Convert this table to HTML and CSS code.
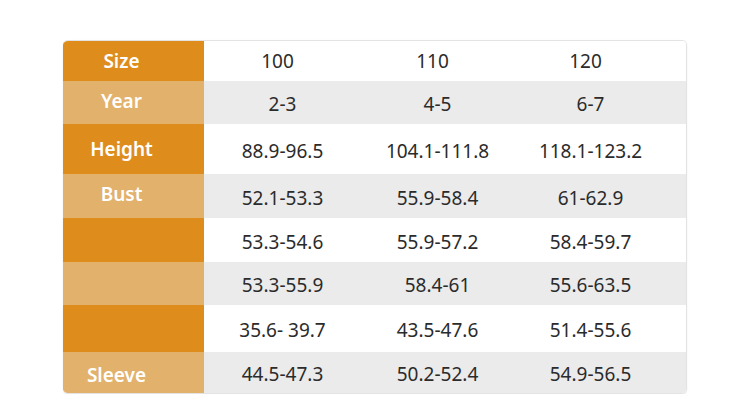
FILE: index.html
```html
<!DOCTYPE html>
<html lang="en">

<head>
    <meta charset="UTF-8">
    <meta name="viewport" content="width=device-width, initial-scale=1.0">
    <title>Size Chart</title>
    <link rel="stylesheet" href="styles.css">
</head>

<body>
    <div class="page">
        <div class="sizeChart">
            <div class="row odd r1">
                <div class="label">Size</div>
                <div class="cell head">100</div>
                <div class="cell head">110</div>
                <div class="cell head">120</div>
                <div class="cell"></div>
            </div>
            <div class="row even r2">
                <div class="label raise">Year</div>
                <div class="cell">2-3</div>
                <div class="cell">4-5</div>
                <div class="cell">6-7</div>
                <div class="cell"></div>
            </div>
            <div class="row odd r3">
                <div class="label">Height</div>
                <div class="cell">88.9-96.5</div>
                <div class="cell">104.1-111.8</div>
                <div class="cell">118.1-123.2</div>
                <div class="cell"></div>
            </div>
            <div class="row even r4">
                <div class="label raise">Bust</div>
                <div class="cell">52.1-53.3</div>
                <div class="cell">55.9-58.4</div>
                <div class="cell">61-62.9</div>
                <div class="cell"></div>
            </div>
            <div class="row odd r5">
                <div class="label"></div>
                <div class="cell">53.3-54.6</div>
                <div class="cell">55.9-57.2</div>
                <div class="cell">58.4-59.7</div>
                <div class="cell"></div>
            </div>
            <div class="row even r6">
                <div class="label"></div>
                <div class="cell">53.3-55.9</div>
                <div class="cell">58.4-61</div>
                <div class="cell">55.6-63.5</div>
                <div class="cell"></div>
            </div>
            <div class="row odd r7">
                <div class="label"></div>
                <div class="cell">35.6- 39.7</div>
                <div class="cell">43.5-47.6</div>
                <div class="cell">51.4-55.6</div>
                <div class="cell"></div>
            </div>
            <div class="row even r8">
                <div class="label sleeve">Sleeve</div>
                <div class="cell">44.5-47.3</div>
                <div class="cell">50.2-52.4</div>
                <div class="cell">54.9-56.5</div>
                <div class="cell"></div>
            </div>
        </div>
    </div>
</body>

</html>
```

FILE: styles.css
```css
body {
    font-family: "Noto Sans", "Open Sans", sans-serif;
    padding: 0;
    margin: 0;
    background-color: #ffffff;
}

.page {
    padding: 40px 0 0 63px;
}

.sizeChart {
    width: 623px;
    border: 1px solid #e3e3e3;
    border-left: none;
    border-radius: 5px;
    overflow: hidden;
    box-shadow: 0 1px 2px rgba(0, 0, 0, 0.08);
}

.row {
    display: grid;
    grid-template-columns: 141px 157px 153px 153px 1fr;
    align-items: center;
}

.r1 { height: 40px; }
.r2 { height: 43px; }
.r3 { height: 50px; }
.r4 { height: 44px; }
.r5 { height: 44px; }
.r6 { height: 43px; }
.r7 { height: 47px; }
.r8 { height: 41px; }

.label {
    height: 100%;
    display: flex;
    align-items: center;
    justify-content: center;
    padding-right: 24px;
    box-sizing: border-box;
    color: #ffffff;
    font-size: 19px;
    font-weight: 600;
}

.odd .label {
    background-color: #de8d1c;
}

.even .label {
    background-color: #e2b16b;
}

.label.raise {
    padding-bottom: 4px;
}

.label.sleeve {
    padding-top: 4px;
    padding-right: 34px;
}

.cell {
    height: 100%;
    display: flex;
    align-items: center;
    justify-content: center;
    padding-top: 3px;
    box-sizing: border-box;
    color: #2b2b2b;
    font-size: 19px;
}

.cell.head {
    padding-top: 0;
    padding-right: 10px;
}

.odd .cell {
    background-color: #ffffff;
}

.even .cell {
    background-color: #ebebeb;
}
```
